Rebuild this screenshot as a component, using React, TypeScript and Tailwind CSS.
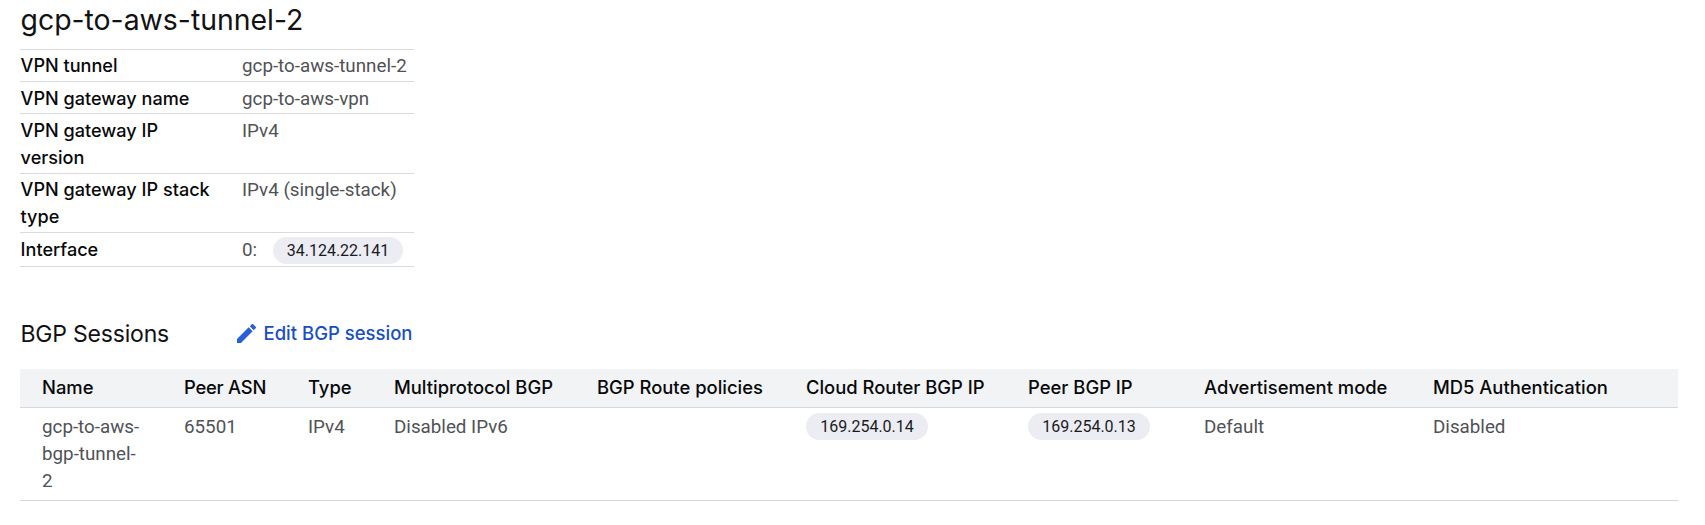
import type { ReactNode } from "react";

function Chip({ children, className = "" }: { children: ReactNode; className?: string }) {
  return (
    <span
      className={`flex h-[27px] items-center justify-center rounded-full bg-[#ecedf2] text-[16px] text-[#1b1b1f] ${className}`}
    >
      {children}
    </span>
  );
}

const details: { label: string; value: ReactNode; height: string; labelPad: string; valuePad: string }[] = [
  { label: "VPN tunnel", value: "gcp-to-aws-tunnel-2", height: "h-[32px]", labelPad: "pt-[2px]", valuePad: "pt-[3px]" },
  { label: "VPN gateway name", value: "gcp-to-aws-vpn", height: "h-[32px]", labelPad: "pt-[3px]", valuePad: "pt-[4px]" },
  { label: "VPN gateway IP version", value: "IPv4", height: "h-[60px]", labelPad: "pt-[3px]", valuePad: "pt-[4px]" },
  { label: "VPN gateway IP stack type", value: "IPv4 (single-stack)", height: "h-[59px]", labelPad: "pt-[2px]", valuePad: "pt-[3px]" },
  {
    label: "Interface",
    value: (
      <span className="flex">
        <span className="w-[31px]">0:</span>
        <Chip className="w-[130px]">34.124.22.141</Chip>
      </span>
    ),
    height: "h-[34px]",
    labelPad: "pt-[3px]",
    valuePad: "pt-[4px]",
  },
];

const columns: { title: string; value: ReactNode; chip?: boolean }[] = [
  { title: "Name", value: <span className="block w-[100px]">gcp-to-aws-bgp-tunnel-2</span> },
  { title: "Peer ASN", value: "65501" },
  { title: "Type", value: "IPv4" },
  { title: "Multiprotocol BGP", value: "Disabled IPv6" },
  { title: "BGP Route policies", value: "" },
  { title: "Cloud Router BGP IP", value: <Chip className="w-[122px]">169.254.0.14</Chip>, chip: true },
  { title: "Peer BGP IP", value: <Chip className="w-[122px]">169.254.0.13</Chip>, chip: true },
  { title: "Advertisement mode", value: "Default" },
  { title: "MD5 Authentication", value: "Disabled" },
];

const grid =
  "grid grid-cols-[142px_124px_86px_203px_209px_222px_176px_229px_1fr] pl-[22px] whitespace-nowrap";

export default function App() {
  return (
    <main className="h-[525px] overflow-hidden bg-white pl-[20px] font-['Roboto',sans-serif] text-[18.8px] leading-[27px] text-[#505256]">
      <h1 className="h-[49px] pt-[2px] pl-[0.5px] font-['Inter',sans-serif] text-[28.4px] leading-[36px] text-[#111214]">
        gcp-to-aws-tunnel-2
      </h1>
      <dl className="w-[394px] border-b border-[#d9dadc]">
        {details.map((d) => (
          <div key={d.label} className={`flex border-t border-[#d9dadc] ${d.height}`}>
            <dt
              className={`w-[222px] pr-[24px] pl-[0.6px] font-['Inter',sans-serif] text-[18.1px] font-medium text-[#08090a] ${d.labelPad}`}
            >
              {d.label}
            </dt>
            <dd className={`whitespace-nowrap ${d.valuePad}`}>{d.value}</dd>
          </div>
        ))}
      </dl>

      <div className="mt-[49px] flex h-[36px] items-center font-['Inter',sans-serif]">
        <h2 className="w-[215px] pl-[0.5px] text-[23px] tracking-[-0.2px] text-[#111214]">BGP Sessions</h2>
        <button className="flex items-center pb-[1px] text-[18.5px] font-medium text-[#1a4fc0]">
          <svg viewBox="3 3 18 18" className="mr-[8px] ml-[1.5px] size-[19px] fill-[#2a5fd8]">
            <path d="M3 17.25V21h3.75L17.81 9.94l-3.75-3.75L3 17.25zM20.71 7.04a1 1 0 0 0 0-1.41l-2.34-2.34a1 1 0 0 0-1.41 0l-1.83 1.83 3.75 3.75 1.83-1.83z" />
          </svg>
          Edit BGP session
        </button>
      </div>

      <section className="mt-[17px] w-[1658px]">
        <div
          className={`${grid} h-[39px] items-center border-b border-[#d5d7da] bg-[#f1f3f4] pb-[2px] font-['Inter',sans-serif] text-[18.4px] font-medium text-[#08090a]`}
        >
          {columns.map((c) => (
            <div key={c.title} className={c.title === "Peer ASN" ? "tracking-[-0.25px]" : ""}>
              {c.title}
            </div>
          ))}
        </div>
        <div className={`${grid} h-[93px] items-start border-b border-[#d5d7da] pt-[5px]`}>
          {columns.map((c) => (
            <div key={c.title} className={`whitespace-normal ${c.chip ? "" : "pt-[1px]"}`}>
              {c.value}
            </div>
          ))}
        </div>
      </section>
    </main>
  );
}
